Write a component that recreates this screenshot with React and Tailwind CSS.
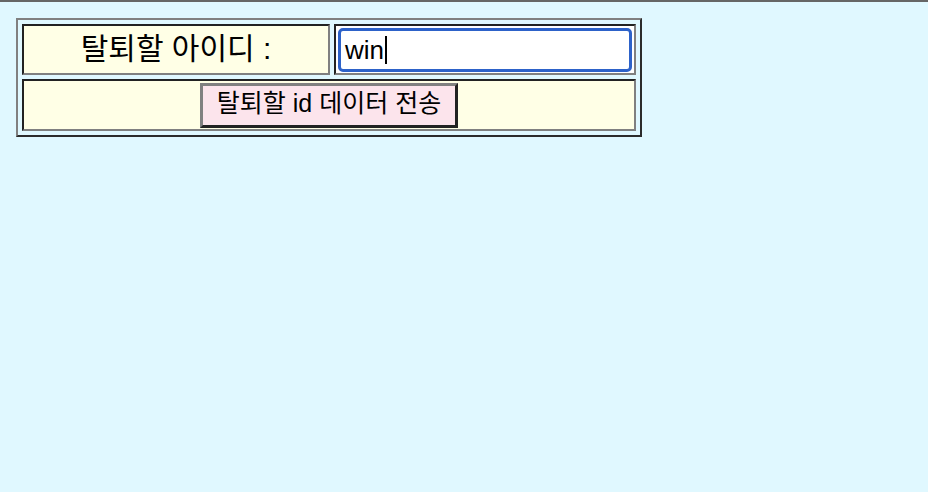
export default function App() {
  return (
    <div className="min-h-screen w-full border-t-2 border-[#666666] bg-[#e0f8ff] font-['Liberation_Sans','Noto_Sans_CJK_KR',sans-serif] text-black">
      <div className="ml-4 mt-4 inline-block border-2 border-t-[#808080] border-l-[#808080] border-b-[#2b2b2b] border-r-[#2b2b2b] p-1">
        <div className="grid grid-cols-[308px_302px] grid-rows-[51px_52px] gap-1">
          <div className="flex items-center justify-center border-2 border-t-[#222] border-l-[#222] border-b-[#808080] border-r-[#808080] bg-[#ffffe6] pb-[3px] text-[30px]">
            탈퇴할 아이디 :
          </div>
          <div className="flex items-center border-2 border-t-[#222] border-l-[#222] border-b-[#808080] border-r-[#808080] bg-white px-[2px] pb-[1px] pt-[2px]">
            <div className="flex h-[44px] w-full items-center rounded-[5px] border-[3px] border-[#2d62c9] bg-white pl-[4px] text-[26px]">
              <span>win</span>
              <span className="ml-[1px] h-[28px] w-[2px] bg-black"></span>
            </div>
          </div>
          <div className="col-span-2 flex items-center justify-center border-2 border-t-[#222] border-l-[#222] border-b-[#808080] border-r-[#808080] bg-[#ffffe6]">
            <button
              type="button"
              className="flex h-[45px] w-[258px] items-center justify-center border-[3px] border-t-[#808080] border-l-[#808080] border-b-[#222] border-r-[#222] bg-[#fce4ec] pb-[2px] text-[25px]"
            >
              탈퇴할 id 데이터 전송
            </button>
          </div>
        </div>
      </div>
    </div>
  );
}
